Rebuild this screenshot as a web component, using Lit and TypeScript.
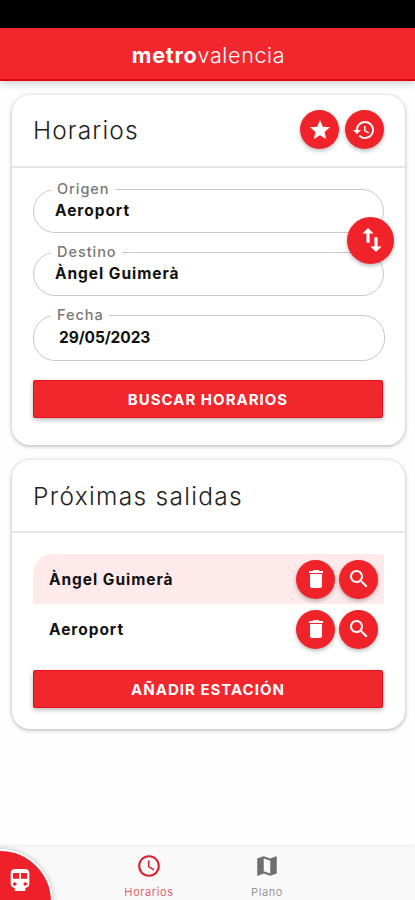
import { LitElement, html, css, svg } from "lit";
import { customElement, property } from "lit/decorators.js";

const ICONS: Record<string, string> = {
  star: "M12 17.27L18.18 21l-1.64-7.03L22 9.24l-7.19-.61L12 2 9.19 8.63 2 9.24l5.46 4.73L5.82 21z",
  history:
    "M13 3c-4.97 0-9 4.03-9 9H1l3.89 3.89.07.14L9 12H6c0-3.87 3.13-7 7-7s7 3.13 7 7-3.13 7-7 7c-1.93 0-3.68-.79-4.94-2.06l-1.42 1.42C8.27 19.99 10.51 21 13 21c4.97 0 9-4.03 9-9s-4.03-9-9-9zm-1 5v5l4.28 2.54.72-1.21-3.5-2.08V8H12z",
  swap: "M9 3L4.800 7.200h3V14h2.400V7.200h3L9 3zm7.200 13.800V10h-2.400v6.800h-3L15 21l4.200-4.200h-3z",
  trash: "M6 19c0 1.1.9 2 2 2h8c1.1 0 2-.9 2-2V7H6v12zM19 4h-3.5l-1-1h-5l-1 1H5v2h14V4z",
  search:
    "M15.5 14h-.79l-.28-.27C15.41 12.59 16 11.11 16 9.5 16 5.91 13.09 3 9.5 3S3 5.91 3 9.5 5.91 16 9.5 16c1.61 0 3.09-.59 4.23-1.57l.27.28v.79l5 4.99L20.49 19l-4.99-5zm-6 0C7.01 14 5 11.99 5 9.5S7.01 5 9.5 5 14 7.01 14 9.5 11.99 14 9.5 14z",
  clock:
    "M11.99 2C6.47 2 2 6.48 2 12s4.47 10 9.99 10C17.52 22 22 17.52 22 12S17.52 2 11.99 2zM12 20c-4.42 0-8-3.58-8-8s3.58-8 8-8 8 3.58 8 8-3.58 8-8 8zm.5-13H11v6l5.25 3.15.75-1.23-4.5-2.67z",
  map: "M20.5 3l-.16.03L15 5.1 9 3 3.36 4.9c-.21.07-.36.25-.36.48V20.5c0 .28.22.5.5.5l.16-.03L9 18.9l6 2.1 5.64-1.9c.21-.07.36-.25.36-.48V3.5c0-.28-.22-.5-.5-.5zM15 19l-6-2.11V5l6 2.11V19z",
  train:
    "M8 2.500C5.500 2.500 4 3.700 4 6v9.500C4 17.400 5.500 18.800 7.500 18.800V21.500h9V18.800c2 0 3.500-1.400 3.500-3.300V6c0-2.300-1.500-3.500-4-3.500zM7.500 17c-.83 0-1.500-.67-1.500-1.500S6.670 14 7.500 14s1.500.67 1.500 1.500S8.330 17 7.500 17zm3.700-6H6V6h5.200v5zm5.300 6c-.83 0-1.500-.67-1.500-1.500s.67-1.500 1.500-1.500 1.500.67 1.500 1.500-.67 1.500-1.500 1.500zm1.500-6h-5.200V6H18v5z",
};

@customElement("mv-icon")
class MvIcon extends LitElement {
  @property() name = "star";
  static styles = css`
    :host { display: block; width: 24px; height: 24px; }
    svg { display: block; width: 100%; height: 100%; fill: currentColor; }
  `;
  render() {
    return html`<svg viewBox="0 0 24 24">${svg`<path d=${ICONS[this.name]}></path>`}</svg>`;
  }
}

@customElement("app-root")
class AppRoot extends LitElement {
  static styles = css`
    :host {
      display: flex;
      flex-direction: column;
      height: 900px;
      overflow: hidden;
      position: relative;
      background: #fefefe;
      color: #111;
      font-family: Inter, "Open Sans", sans-serif;
    }
    * { box-sizing: border-box; }
    .status { height: 28px; background: #000; flex: none; }
    .bar {
      flex: none;
      height: 53px;
      background: #f1272d;
      border-bottom: 2px solid #e30613;
      color: #fff;
      display: flex;
      justify-content: center;
      align-items: center;
      font-size: 21.5px;
      padding: 2px 0 0 2px;
      box-shadow: 0 2px 8px rgba(0, 0, 0, 0.22);
    }
    .bold { font-weight: 700; letter-spacing: 0.8px; }
    .light { font-weight: 300; letter-spacing: 0.65px; }
    main { flex: 1; padding: 14px 10px 0 12px; display: flex; flex-direction: column; gap: 15px; }
    .card {
      background: #fff;
      border-radius: 18px;
      box-shadow: 0 1px 4px rgba(0, 0, 0, 0.32);
    }
    .search { height: 350px; }
    .next { height: 269px; }
    .head {
      height: 73px;
      border-bottom: 2px solid #e6e6e6;
      padding: 0 21.5px 0 21px;
      display: flex;
      align-items: center;
      justify-content: space-between;
    }
    .search .head { padding-bottom: 2px; }
    .title { font-size: 24.5px; font-weight: 300; color: #222; }
    .t1 { letter-spacing: 1.1px; }
    .t2 { letter-spacing: 1.3px; }
    .round {
      width: 39px;
      height: 39px;
      border-radius: 50%;
      background: #f1232a;
      color: #fff;
      display: flex;
      align-items: center;
      justify-content: center;
      box-shadow: 0 2px 4px rgba(0, 0, 0, 0.28);
    }
    .pair { display: flex; gap: 5.5px; }
    .row .pair { gap: 4px; }
    .form { padding: 21px 20px 0 21px; position: relative; display: flex; flex-direction: column; }
    .field {
      position: relative;
      height: 44px;
      width: 351px;
      border: 1.5px solid #c9c9c9;
      border-radius: 22px;
      margin-bottom: 19px;
      padding: 0 0 1px 21px;
      display: flex;
      align-items: center;
      font-size: 15.5px;
      font-weight: 650;
      letter-spacing: 0.95px;
    }
    .field.date { height: 46px; width: 352px; padding-left: 25px; letter-spacing: -0.1px; }
    .label {
      position: absolute;
      left: 17px;
      top: -10px;
      background: #fff;
      padding: 0 5px 0 6px;
      font-size: 14.5px;
      line-height: 18px;
      font-weight: 550;
      letter-spacing: 0.95px;
      color: #777;
    }
    .round mv-icon { width: 24px; height: 24px; }
    .round.swap {
      position: absolute;
      left: 335px;
      top: 49px;
      width: 47px;
      height: 47px;
      padding: 0 0 2px 2px;
    }
    .round.swap mv-icon { width: 32px; height: 32px; }
    .cta {
      height: 38px;
      width: 350px;
      background: #f1272d;
      border: 1px solid #e8101b;
      border-radius: 2px;
      color: #fff;
      font-size: 15px;
      font-weight: 700;
      letter-spacing: 1px;
      display: flex;
      align-items: center;
      justify-content: center;
      box-shadow: 0 2px 5px rgba(0, 0, 0, 0.28);
    }
    .list { padding: 21px 20px 0 21px; }
    .row {
      height: 50px;
      width: 351px;
      padding: 0 6px 0 16px;
      display: flex;
      align-items: center;
      justify-content: space-between;
      font-size: 15.5px;
      font-weight: 650;
      letter-spacing: 0.95px;
    }
    .row.on { background: #fee9eb; border-radius: 20px 3px 0 0; }
    .list .cta { margin-top: 16px; }
    nav {
      flex: none;
      height: 54px;
      background: #f9f9f9;
      border-top: 1px solid #f0f0f0;
      box-shadow: 0 -1px 3px rgba(0, 0, 0, 0.05);
      position: relative;
      display: flex;
      padding-left: 90px;
    }
    .tab {
      width: 118px;
      display: flex;
      flex-direction: column;
      align-items: center;
      padding-top: 6px;
      font-size: 11px;
      line-height: 14px;
      letter-spacing: 0.6px;
      gap: 6px;
      color: #999;
    }
    .tab mv-icon { width: 26px; height: 26px; color: #707070; }
    .tab.active, .tab.active mv-icon { color: #d9202c; }
    .tab.active .cap { opacity: 0.7; }
    .train {
      position: absolute;
      left: -53px;
      top: 2px;
      width: 106px;
      height: 106px;
      border-radius: 50%;
      background: #f0202a;
      border: 2px solid #fff;
      box-shadow: 0 0 5px rgba(0, 0, 0, 0.25);
      color: #fff;
      padding: 15px 0 0 57px;
    }
    .train mv-icon { width: 28px; height: 28px; }
  `;

  private field(label: string, value: string, cls = "") {
    return html`<div class="field ${cls}">
      <span class="label">${label}</span><span>${value}</span>
    </div>`;
  }

  private row(name: string, on: boolean) {
    return html`<div class="row ${on ? "on" : ""}">
      <span>${name}</span>
      <div class="pair">
        <div class="round"><mv-icon name="trash"></mv-icon></div>
        <div class="round"><mv-icon name="search"></mv-icon></div>
      </div>
    </div>`;
  }

  render() {
    return html`
      <div class="status"></div>
      <header class="bar"><span class="bold">metro</span><span class="light">valencia</span></header>
      <main>
        <section class="card search">
          <div class="head">
            <span class="title t1">Horarios</span>
            <div class="pair">
              <div class="round"><mv-icon name="star"></mv-icon></div>
              <div class="round"><mv-icon name="history"></mv-icon></div>
            </div>
          </div>
          <div class="form">
            ${this.field("Origen", "Aeroport")} ${this.field("Destino", "Àngel Guimerà")}
            ${this.field("Fecha", "29/05/2023", "date")}
            <div class="cta">BUSCAR HORARIOS</div>
            <div class="round swap"><mv-icon name="swap"></mv-icon></div>
          </div>
        </section>
        <section class="card next">
          <div class="head"><span class="title t2">Próximas salidas</span></div>
          <div class="list">
            ${this.row("Àngel Guimerà", true)} ${this.row("Aeroport", false)}
            <div class="cta">AÑADIR ESTACIÓN</div>
          </div>
        </section>
      </main>
      <nav>
        <div class="train"><mv-icon name="train"></mv-icon></div>
        <div class="tab active"><mv-icon name="clock"></mv-icon><span class="cap">Horarios</span></div>
        <div class="tab"><mv-icon name="map"></mv-icon><span class="cap">Plano</span></div>
      </nav>
    `;
  }
}
